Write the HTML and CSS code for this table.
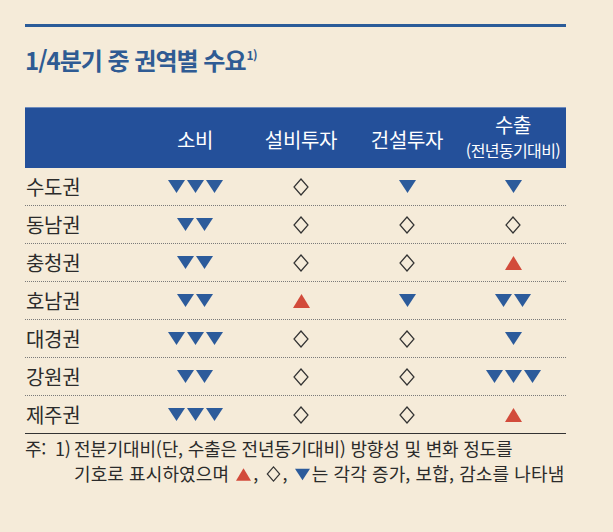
FILE: index.html
```html
<!DOCTYPE html>
<html lang="ko">
<head>
<meta charset="utf-8">
<title>1/4분기 중 권역별 수요</title>
<link rel="stylesheet" href="styles.css">
</head>
<body>
<div class="page">
  <div class="rule"></div>
  <h1 class="title">1/4분기 중 권역별 수요<sup>1)</sup></h1>
  <div class="table">
    <div class="row head">
      <div></div>
      <div class="h">소비</div>
      <div class="h">설비투자</div>
      <div class="h">건설투자</div>
      <div class="h stack"><span>수출</span><span class="sub">(전년동기대비)</span></div>
    </div>
    <div class="row">
      <div class="lbl">수도권</div>
      <div class="c"><svg class="dn" viewBox="0 0 17 13"><path d="M0 0H17L8.5 13Z"/></svg><svg class="dn" viewBox="0 0 17 13"><path d="M0 0H17L8.5 13Z"/></svg><svg class="dn" viewBox="0 0 17 13"><path d="M0 0H17L8.5 13Z"/></svg></div>
      <div class="c"><svg class="dia" viewBox="0 0 16 18"><path d="M8 1L15 9L8 17L1 9Z"/></svg></div>
      <div class="c"><svg class="dn" viewBox="0 0 17 13"><path d="M0 0H17L8.5 13Z"/></svg></div>
      <div class="c"><svg class="dn" viewBox="0 0 17 13"><path d="M0 0H17L8.5 13Z"/></svg></div>
    </div>
    <div class="row">
      <div class="lbl">동남권</div>
      <div class="c"><svg class="dn" viewBox="0 0 17 13"><path d="M0 0H17L8.5 13Z"/></svg><svg class="dn" viewBox="0 0 17 13"><path d="M0 0H17L8.5 13Z"/></svg></div>
      <div class="c"><svg class="dia" viewBox="0 0 16 18"><path d="M8 1L15 9L8 17L1 9Z"/></svg></div>
      <div class="c"><svg class="dia" viewBox="0 0 16 18"><path d="M8 1L15 9L8 17L1 9Z"/></svg></div>
      <div class="c"><svg class="dia" viewBox="0 0 16 18"><path d="M8 1L15 9L8 17L1 9Z"/></svg></div>
    </div>
    <div class="row">
      <div class="lbl">충청권</div>
      <div class="c"><svg class="dn" viewBox="0 0 17 13"><path d="M0 0H17L8.5 13Z"/></svg><svg class="dn" viewBox="0 0 17 13"><path d="M0 0H17L8.5 13Z"/></svg></div>
      <div class="c"><svg class="dia" viewBox="0 0 16 18"><path d="M8 1L15 9L8 17L1 9Z"/></svg></div>
      <div class="c"><svg class="dia" viewBox="0 0 16 18"><path d="M8 1L15 9L8 17L1 9Z"/></svg></div>
      <div class="c"><svg class="up" viewBox="0 0 17 14"><path d="M8.5 0L17 14H0Z"/></svg></div>
    </div>
    <div class="row">
      <div class="lbl">호남권</div>
      <div class="c"><svg class="dn" viewBox="0 0 17 13"><path d="M0 0H17L8.5 13Z"/></svg><svg class="dn" viewBox="0 0 17 13"><path d="M0 0H17L8.5 13Z"/></svg></div>
      <div class="c"><svg class="up" viewBox="0 0 17 14"><path d="M8.5 0L17 14H0Z"/></svg></div>
      <div class="c"><svg class="dn" viewBox="0 0 17 13"><path d="M0 0H17L8.5 13Z"/></svg></div>
      <div class="c"><svg class="dn" viewBox="0 0 17 13"><path d="M0 0H17L8.5 13Z"/></svg><svg class="dn" viewBox="0 0 17 13"><path d="M0 0H17L8.5 13Z"/></svg></div>
    </div>
    <div class="row">
      <div class="lbl">대경권</div>
      <div class="c"><svg class="dn" viewBox="0 0 17 13"><path d="M0 0H17L8.5 13Z"/></svg><svg class="dn" viewBox="0 0 17 13"><path d="M0 0H17L8.5 13Z"/></svg><svg class="dn" viewBox="0 0 17 13"><path d="M0 0H17L8.5 13Z"/></svg></div>
      <div class="c"><svg class="dia" viewBox="0 0 16 18"><path d="M8 1L15 9L8 17L1 9Z"/></svg></div>
      <div class="c"><svg class="dia" viewBox="0 0 16 18"><path d="M8 1L15 9L8 17L1 9Z"/></svg></div>
      <div class="c"><svg class="dn" viewBox="0 0 17 13"><path d="M0 0H17L8.5 13Z"/></svg></div>
    </div>
    <div class="row">
      <div class="lbl">강원권</div>
      <div class="c"><svg class="dn" viewBox="0 0 17 13"><path d="M0 0H17L8.5 13Z"/></svg><svg class="dn" viewBox="0 0 17 13"><path d="M0 0H17L8.5 13Z"/></svg></div>
      <div class="c"><svg class="dia" viewBox="0 0 16 18"><path d="M8 1L15 9L8 17L1 9Z"/></svg></div>
      <div class="c"><svg class="dia" viewBox="0 0 16 18"><path d="M8 1L15 9L8 17L1 9Z"/></svg></div>
      <div class="c"><svg class="dn" viewBox="0 0 17 13"><path d="M0 0H17L8.5 13Z"/></svg><svg class="dn" viewBox="0 0 17 13"><path d="M0 0H17L8.5 13Z"/></svg><svg class="dn" viewBox="0 0 17 13"><path d="M0 0H17L8.5 13Z"/></svg></div>
    </div>
    <div class="row last">
      <div class="lbl">제주권</div>
      <div class="c"><svg class="dn" viewBox="0 0 17 13"><path d="M0 0H17L8.5 13Z"/></svg><svg class="dn" viewBox="0 0 17 13"><path d="M0 0H17L8.5 13Z"/></svg><svg class="dn" viewBox="0 0 17 13"><path d="M0 0H17L8.5 13Z"/></svg></div>
      <div class="c"><svg class="dia" viewBox="0 0 16 18"><path d="M8 1L15 9L8 17L1 9Z"/></svg></div>
      <div class="c"><svg class="dia" viewBox="0 0 16 18"><path d="M8 1L15 9L8 17L1 9Z"/></svg></div>
      <div class="c"><svg class="up" viewBox="0 0 17 14"><path d="M8.5 0L17 14H0Z"/></svg></div>
    </div>
  </div>
  <div class="note">
    <span class="n1">주:</span>
    <span class="n2">1)</span>
    <span class="n3">전분기대비(단, 수출은 전년동기대비) 방향성 및 변화 정도를<br><span class="l2">기호로 표시하였으며 <svg class="sup" viewBox="0 0 17 14"><path d="M8.5 0L17 14H0Z"/></svg>, <svg class="sdia" viewBox="0 0 16 18"><path d="M8 1L15 9L8 17L1 9Z"/></svg>, <svg class="sdn" viewBox="0 0 17 13"><path d="M0 0H17L8.5 13Z"/></svg>는 각각 증가, 보합, 감소를 나타냄</span></span>
  </div>
</div>
</body>
</html>
```
FILE: styles.css
```css
html, body {
  margin: 0;
  padding: 0;
  background: #f5ebd9;
}
body {
  font-family: "Noto Sans CJK KR", "Noto Sans", sans-serif;
  color: #2b2b2b;
}
.page {
  width: 541px;
  margin-left: 25px;
  padding-top: 24px;
}
.rule {
  height: 3px;
  background: #2b5c99;
}
.title {
  margin: 18px 0 32px 0;
  height: 30px;
  line-height: 30px;
  font-size: 24px;
  font-weight: 700;
  letter-spacing: -1px;
  color: #2f5b93;
}
.title sup {
  font-size: 12px;
  font-weight: 700;
  vertical-align: 10px;
  line-height: 0;
  letter-spacing: -0.5px;
  margin-left: 1px;
}
.row {
  display: grid;
  grid-template-columns: 117px repeat(4, 106px);
  height: 38px;
  box-sizing: border-box;
  border-bottom: 1px dotted #7a7a7a;
  align-items: center;
}
.row.last {
  border-bottom: 1.5px solid #333;
}
.row.head {
  height: 61px;
  background: #24509a;
  border-top: 1px solid #6e8cbd;
  border-bottom: none;
  color: #fff;
}
.h {
  text-align: center;
  font-size: 20px;
  letter-spacing: -0.3px;
  padding-top: 2px;
}
.stack {
  display: flex;
  flex-direction: column;
  align-items: center;
  line-height: 24px;
  padding-top: 0;
}
.stack .sub {
  font-size: 16px;
  letter-spacing: -0.6px;
  line-height: 26px;
}
.lbl {
  font-size: 20px;
  letter-spacing: -0.3px;
  padding-left: 1px;
}
.c {
  display: flex;
  justify-content: center;
  align-items: center;
  gap: 2px;
}
.dn {
  width: 17px;
  height: 13px;
  fill: #2c5b9b;
}
.up {
  width: 17px;
  height: 14px;
  fill: #d24b3b;
}
.dia {
  width: 16px;
  height: 18px;
  fill: none;
  stroke: #333;
  stroke-width: 1.2;
}
.note {
  display: grid;
  grid-template-columns: 30px 19px auto;
  font-size: 18px;
  line-height: 25px;
  padding-top: 2px;
  letter-spacing: -0.2px;
}
.l2 {
  letter-spacing: 0.1px;
}
.sup {
  width: 15px;
  height: 13px;
  margin: 0 2px;
  fill: #d24b3b;
}
.sdia {
  width: 15px;
  height: 16px;
  margin: 0 2px;
  vertical-align: -1px;
  fill: none;
  stroke: #333;
  stroke-width: 1.3;
}
.sdn {
  width: 15px;
  height: 13px;
  margin: 0 2px;
  fill: #2c5b9b;
}
```
